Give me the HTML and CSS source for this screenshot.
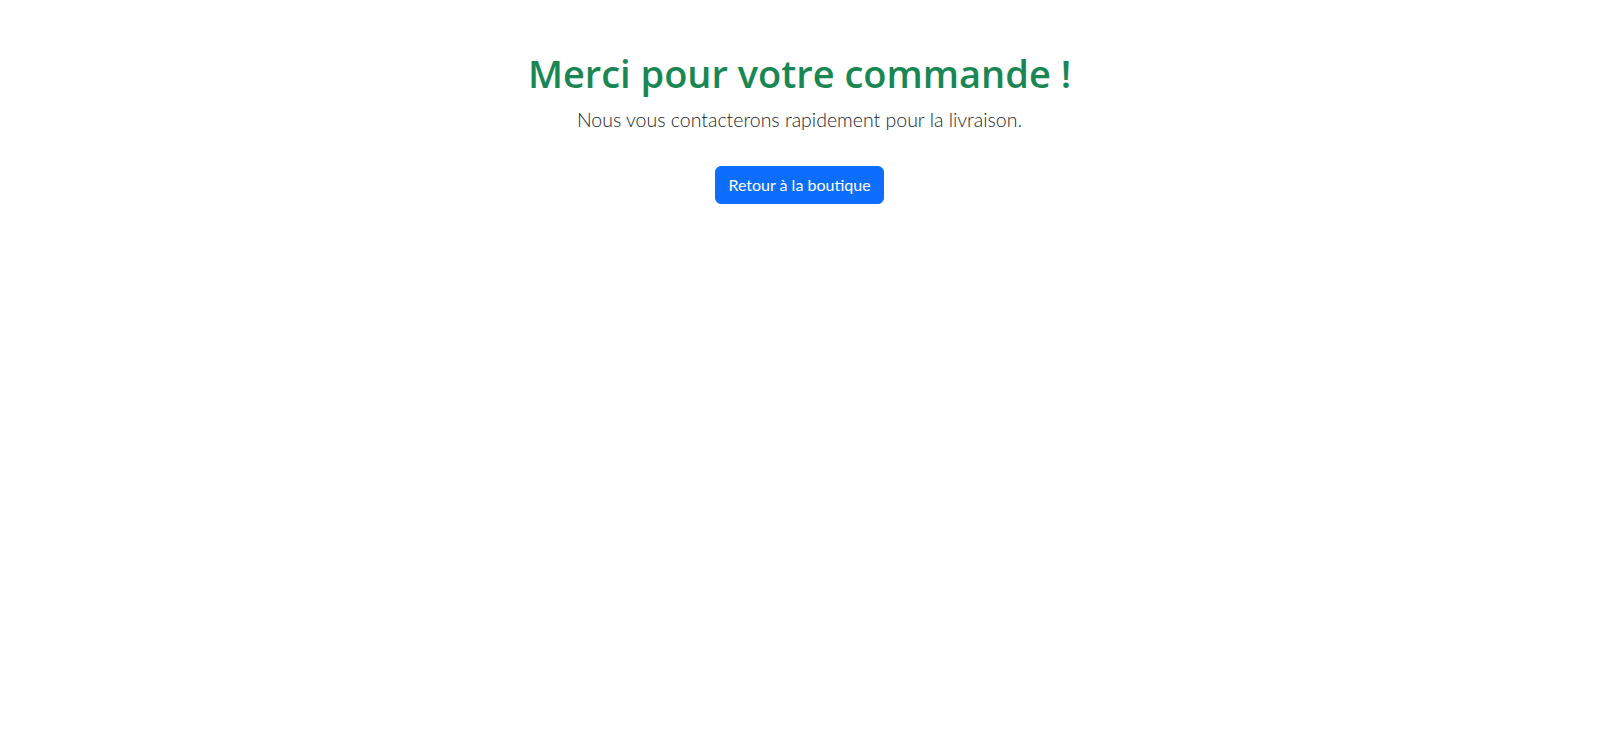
FILE: index.html
```html
<!DOCTYPE html>
<html lang="fr">
<head>
<meta charset="utf-8">
<title>Merci</title>
<link rel="stylesheet" href="styles.css">
</head>
<body>
<main class="container">
  <h1 class="title">Merci pour votre commande !</h1>
  <p class="lead">Nous vous contacterons rapidement pour la livraison.</p>
  <a class="btn" href="#">Retour à la boutique</a>
</main>
</body>
</html>
```

FILE: styles.css
```css
* { box-sizing: border-box; }
body {
  margin: 0;
  font-family: "Lato", "Open Sans", sans-serif;
  font-size: 16px;
  line-height: 1.5;
  color: #212529;
  background: #fff;
}
.container {
  padding-top: 49px;
  text-align: center;
}
.title {
  margin: 0 0 8px;
  font-family: "Open Sans", "Noto Sans", sans-serif;
  font-size: 38px;
  line-height: 48px;
  font-weight: 600;
  color: #198754;
}
.lead {
  margin: 0 0 31px;
  font-size: 19.5px;
  line-height: 30px;
  font-weight: 300;
}
.btn {
  display: inline-block;
  padding: 6px 12px;
  border: 1px solid #0d6efd;
  border-radius: 6px;
  background: #0d6efd;
  color: #fff;
  font-size: 16px;
  line-height: 24px;
  text-decoration: none;
}
```
